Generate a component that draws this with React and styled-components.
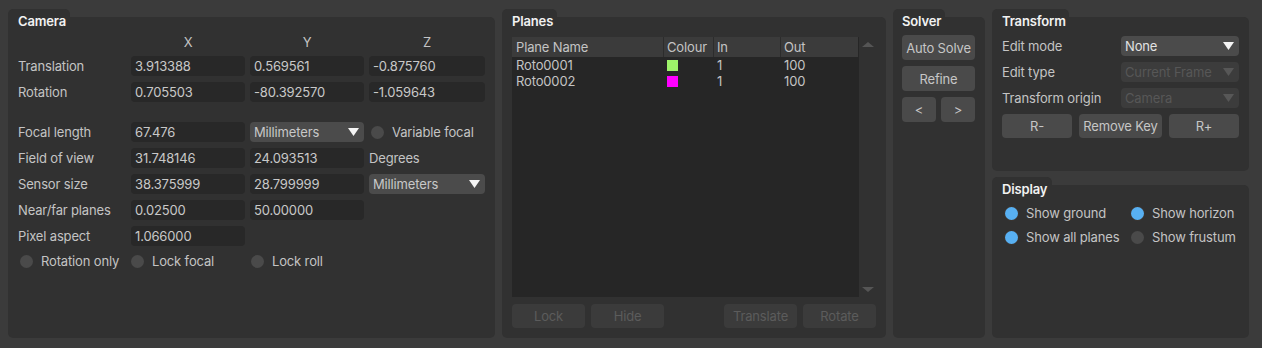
import React from "react";
import styled, { createGlobalStyle } from "styled-components";

const Global = createGlobalStyle`
  html, body { margin: 0; padding: 0; background: #3b3b3b; }
  * { box-sizing: border-box; }
`;

const Page = styled.div`
  display: flex;
  gap: 7px;
  height: 348px;
  padding: 9px 13px 10px 8px;
  background: #3b3b3b;
  font-family: Inter, "Noto Sans", sans-serif;
  font-size: 13px;
  letter-spacing: -0.15px;
  color: #c4c4c4;
`;

const Panel = styled.div`
  display: flex;
  flex-direction: column;
  width: ${(p) => (p.$w ? `${p.$w}px` : "auto")};
  height: ${(p) => (p.$h ? `${p.$h}px` : "auto")};
  flex: ${(p) => (p.$grow ? "1" : "none")};
  min-height: 0;
`;

const Cap = styled.div`
  height: 8px;
  width: ${(p) => p.$w}px;
  background: #313131;
  border-radius: 5px 5px 0 0;
`;

const Body = styled.div`
  flex: 1;
  display: flex;
  flex-direction: column;
  background: #313131;
  border-radius: 0 5px 5px 5px;
  padding: 0 10px 10px ${(p) => p.$pl || 10}px;
  min-height: 0;
`;

const Title = styled.div`
  font-weight: 600;
  color: #f2f2f2;
  line-height: 16px;
  margin-top: -4px;
`;

const RightCol = styled.div`
  display: flex;
  flex-direction: column;
  gap: 6px;
  width: 257px;
`;

/* Camera */
const CamGrid = styled.div`
  display: grid;
  grid-template-columns: 108px 114px 114px 116px;
  column-gap: 5px;
  row-gap: 6px;
  grid-template-rows: 16px repeat(2, 20px) 8px repeat(5, 20px) 18px;
  margin-top: 5px;
`;

const ColHead = styled.div`
  text-align: center;
  line-height: 16px;
  color: #c4c4c4;
`;

const Label = styled.div`
  display: flex;
  align-items: center;
  height: 20px;
  white-space: nowrap;
  color: #c4c4c4;
`;

const Field = styled.div`
  height: 20px;
  display: flex;
  align-items: center;
  padding-left: 4px;
  background: #282828;
  border-radius: 4px;
  color: #c8c8c8;
`;

const SelectBox = styled.div`
  height: 20px;
  display: flex;
  align-items: center;
  justify-content: space-between;
  padding: 0 5px 0 4px;
  background: ${(p) => (p.$disabled ? "#3c3c3c" : "#4b4b4b")};
  border-radius: 4px;
  color: ${(p) => (p.$disabled ? "#575757" : p.$bright ? "#e2e2e2" : "#c8c8c8")};
  white-space: nowrap;
`;

const Spacer = styled.div`
  grid-column: 1 / -1;
`;

const Select = ({ value, disabled, bright }) => (
  <SelectBox $disabled={disabled} $bright={bright}>
    <span>{value}</span>
    <svg width="11" height="8" viewBox="0 0 11 8">
      <polygon points="0,0 11,0 5.5,8" fill={disabled ? "#575757" : "#f4f4f4"} />
    </svg>
  </SelectBox>
);

const CheckItem = styled.div`
  display: flex;
  align-items: center;
  gap: 8px;
  height: ${(p) => p.$h || 20}px;
  white-space: nowrap;
  padding-left: ${(p) => p.$indent || 0}px;
`;

const Dot = styled.span`
  width: 13px;
  height: 13px;
  border-radius: 50%;
  flex: none;
  background: ${(p) => (p.$on ? "#58b0f2" : "#4a4a4a")};
  box-shadow: ${(p) => (p.$on ? "0 0 0 1px #3a3430" : "none")};
`;

const Check = ({ on, children, indent, h }) => (
  <CheckItem $indent={indent} $h={h}>
    <Dot $on={on} />
    <span>{children}</span>
  </CheckItem>
);

/* Planes */
const Table = styled.div`
  margin-top: 8px;
  flex: 1;
  display: flex;
  background: #262626;
  min-height: 0;
`;

const TableMain = styled.div`
  flex: 1;
  display: flex;
  flex-direction: column;
`;

const TRow = styled.div`
  display: grid;
  grid-template-columns: 151px 50px 67px 1fr;
  height: ${(p) => (p.$head ? 20 : 16)}px;
  background: ${(p) => (p.$head ? "#3b3b3b" : "transparent")};
  align-items: center;
`;

const TCell = styled.div`
  height: 100%;
  display: flex;
  align-items: center;
  padding-left: ${(p) => (p.$col ? 3 : 4)}px;
  border-left: ${(p) => (p.$col ? "1px solid" : "none")};
  border-left-color: ${(p) => (p.$line ? "#2c2c2c" : "transparent")};
  color: #c4c4c4;
`;

const Swatch = styled.span`
  width: 11px;
  height: 11px;
  background: ${(p) => p.$c};
`;

const Scroll = styled.div`
  width: 18px;
  display: flex;
  flex-direction: column;
  justify-content: space-between;
  align-items: center;
  padding: 5px 0 5px;
  background: #313131;
  border-left: 1px solid #262626;
`;

const BtnRow = styled.div`
  display: flex;
  gap: ${(p) => p.$gap || 6}px;
  margin-top: ${(p) => p.$mt || 0}px;
`;

const Btn = styled.button`
  height: ${(p) => p.$h || 24}px;
  width: ${(p) => (p.$w ? `${p.$w}px` : "auto")};
  flex: ${(p) => (p.$grow ? "1" : "none")};
  margin-left: ${(p) => (p.$push ? "auto" : "0")};
  border: none;
  border-radius: 4px;
  padding: 0;
  font: inherit;
  letter-spacing: inherit;
  background: ${(p) => (p.disabled ? "#3b3b3b" : "#4a4a4a")};
  color: ${(p) => (p.disabled ? "#5c5c5c" : "#c6c6c6")};
  white-space: nowrap;
`;

const SolverStack = styled.div`
  display: flex;
  flex-direction: column;
  gap: 6px;
  margin-top: 6px;
`;

const FormGrid = styled.div`
  display: grid;
  grid-template-columns: 119px 118px;
  row-gap: 6px;
  margin-top: 7px;
`;

const DispGrid = styled.div`
  display: grid;
  grid-template-columns: 126px 1fr;
  row-gap: 4px;
  margin-top: 6px;
  padding-left: 3px;
`;

const planes = [
  { name: "Roto0001", c: "#9ef36a", inn: 1, out: 100 },
  { name: "Roto0002", c: "#ff00ff", inn: 1, out: 100 },
];

export default function App() {
  return (
    <>
      <Global />
      <Page>
        <Panel $w={487}>
          <Cap $w={62} />
          <Body>
            <Title>Camera</Title>
            <CamGrid>
              <div />
              <ColHead>X</ColHead>
              <ColHead>Y</ColHead>
              <ColHead>Z</ColHead>

              <Label>Translation</Label>
              <Field>3.913388</Field>
              <Field>0.569561</Field>
              <Field>-0.875760</Field>

              <Label>Rotation</Label>
              <Field>0.705503</Field>
              <Field>-80.392570</Field>
              <Field>-1.059643</Field>

              <Spacer />

              <Label>Focal length</Label>
              <Field>67.476</Field>
              <Select value="Millimeters" />
              <Check indent={2}>Variable focal</Check>

              <Label>Field of view</Label>
              <Field>31.748146</Field>
              <Field>24.093513</Field>
              <Label>Degrees</Label>

              <Label>Sensor size</Label>
              <Field>38.375999</Field>
              <Field>28.799999</Field>
              <Select value="Millimeters" />

              <Label>Near/far planes</Label>
              <Field>0.02500</Field>
              <Field>50.00000</Field>
              <div />

              <Label>Pixel aspect</Label>
              <Field>1.066000</Field>
              <div />
              <div />

              <Check indent={2} h={18}>Rotation only</Check>
              <Check h={18}>Lock focal</Check>
              <Check indent={1} h={18}>Lock roll</Check>
              <div />
            </CamGrid>
          </Body>
        </Panel>

        <Panel $w={384}>
          <Cap $w={55} />
          <Body>
            <Title>Planes</Title>
            <Table>
              <TableMain>
                <TRow $head>
                  <TCell>Plane Name</TCell>
                  <TCell $col $line>Colour</TCell>
                  <TCell $col $line>In</TCell>
                  <TCell $col $line>Out</TCell>
                </TRow>
                {planes.map((p) => (
                  <TRow key={p.name}>
                    <TCell>{p.name}</TCell>
                    <TCell $col>
                      <Swatch $c={p.c} />
                    </TCell>
                    <TCell $col>{p.inn}</TCell>
                    <TCell $col>{p.out}</TCell>
                  </TRow>
                ))}
              </TableMain>
              <Scroll>
                <svg width="12" height="5" viewBox="0 0 12 5">
                  <polygon points="6,0 12,5 0,5" fill="#555" />
                </svg>
                <svg width="12" height="5" viewBox="0 0 12 5">
                  <polygon points="0,0 12,0 6,5" fill="#555" />
                </svg>
              </Scroll>
            </Table>
            <BtnRow $gap={6} $mt={7}>
              <Btn disabled $w={73}>Lock</Btn>
              <Btn disabled $w={73}>Hide</Btn>
              <Btn disabled $w={73} $push>Translate</Btn>
              <Btn disabled $w={73}>Rotate</Btn>
            </BtnRow>
          </Body>
        </Panel>

        <Panel $w={92}>
          <Cap $w={52} />
          <Body $pl={9}>
            <Title>Solver</Title>
            <SolverStack>
              <Btn $h={25}>Auto Solve</Btn>
              <Btn $h={25}>Refine</Btn>
              <BtnRow $gap={5}>
                <Btn $h={25} $grow>&lt;</Btn>
                <Btn $h={25} $grow>&gt;</Btn>
              </BtnRow>
            </SolverStack>
          </Body>
        </Panel>

        <RightCol>
          <Panel $h={162}>
            <Cap $w={77} />
            <Body>
              <Title>Transform</Title>
              <FormGrid>
                <Label>Edit mode</Label>
                <Select value="None" bright />
                <Label>Edit type</Label>
                <Select value="Current Frame" disabled />
                <Label>Transform origin</Label>
                <Select value="Camera" disabled />
              </FormGrid>
              <BtnRow $gap={7} $mt={6}>
                <Btn $w={70}>R-</Btn>
                <Btn $w={83}>Remove Key</Btn>
                <Btn $w={70}>R+</Btn>
              </BtnRow>
            </Body>
          </Panel>
          <Panel $grow>
            <Cap $w={60} />
            <Body>
              <Title>Display</Title>
              <DispGrid>
                <Check on>Show ground</Check>
                <Check on>Show horizon</Check>
                <Check on>Show all planes</Check>
                <Check>Show frustum</Check>
              </DispGrid>
            </Body>
          </Panel>
        </RightCol>
      </Page>
    </>
  );
}
